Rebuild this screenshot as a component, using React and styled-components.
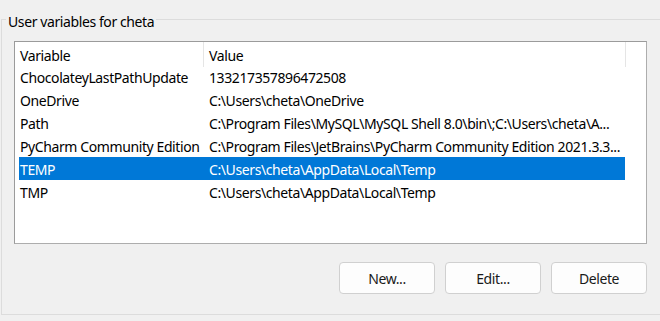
import React from 'react'
import styled, { createGlobalStyle } from 'styled-components'

const GlobalStyle = createGlobalStyle`
body {
    margin: 0;
    background: #f0f0f0;
    font-family: "Segoe UI", "Noto Sans", sans-serif;
    letter-spacing: -0.4px;
    color: #000;
}
`

const Page = styled.div`
width: 660px;
height: 321px;
overflow: hidden;
`

const GroupBox = styled.fieldset`
margin: 6px -30px 0 1px;
padding: 9px 0 20px 12px;
border: 1px solid #dcdcdc;
min-width: 0;
`

const Legend = styled.legend`
margin-left: -8px;
padding: 6px 2px 0 2px;
font-size: 14px;
line-height: 20px;
`

const ListBox = styled.div`
box-sizing: border-box;
width: 633px;
height: 203px;
background: #fff;
border: 1px solid #9b9b9b;
border-right-color: #adadad;
border-bottom-color: #adadad;
font-size: 14px;
`

const Header = styled.div`
display: grid;
grid-template-columns: 189px 422px 1fr;
height: 23px;
`

const HeaderCell = styled.div`
padding: 3px 0 0 5px;
line-height: 21px;
border-right: ${props => props.last ? 'none' : '1px solid #e5e5e5'};
height: 25px;
box-sizing: border-box;
white-space: nowrap;
`

const Row = styled.div`
display: grid;
grid-template-columns: 185px 421px;
width: 606px;
margin-left: 4px;
height: 23px;
background: ${props => props.selected ? '#0078d7' : 'transparent'};
color: ${props => props.selected ? '#fff' : '#000'};
`

const Cell = styled.div`
box-sizing: border-box;
height: 23px;
padding: 2px 0 0 ${props => props.value ? '5px' : '1px'};
line-height: 21px;
white-space: nowrap;
overflow: hidden;
`

const ButtonRow = styled.div`
display: flex;
justify-content: flex-end;
gap: 10px;
width: 633px;
margin-top: 18px;
`

const Button = styled.button`
box-sizing: border-box;
width: 96px;
height: 32px;
background: #fdfdfd;
border: 1px solid #d0d0d0;
border-radius: 4px;
font-family: inherit;
font-size: 14px;
letter-spacing: inherit;
color: #1a1a1a;
padding: 0;
`

const vars = [
    { name: 'ChocolateyLastPathUpdate', value: '133217357896472508' },
    { name: 'OneDrive', value: 'C:\\Users\\cheta\\OneDrive' },
    { name: 'Path', value: 'C:\\Program Files\\MySQL\\MySQL Shell 8.0\\bin\\;C:\\Users\\cheta\\A...' },
    { name: 'PyCharm Community Edition', value: 'C:\\Program Files\\JetBrains\\PyCharm Community Edition 2021.3.3...' },
    { name: 'TEMP', value: 'C:\\Users\\cheta\\AppData\\Local\\Temp', selected: true },
    { name: 'TMP', value: 'C:\\Users\\cheta\\AppData\\Local\\Temp' },
]

export default function App() {
    return (
        <Page>
            <GlobalStyle />
            <GroupBox>
                <Legend>User variables for cheta</Legend>
                <ListBox>
                    <Header>
                        <HeaderCell>Variable</HeaderCell>
                        <HeaderCell>Value</HeaderCell>
                        <HeaderCell last />
                    </Header>
                    {vars.map(v => (
                        <Row key={v.name} selected={v.selected}>
                            <Cell>{v.name}</Cell>
                            <Cell value>{v.value}</Cell>
                        </Row>
                    ))}
                </ListBox>
                <ButtonRow>
                    <Button>New...</Button>
                    <Button>Edit...</Button>
                    <Button>Delete</Button>
                </ButtonRow>
            </GroupBox>
        </Page>
    )
}
